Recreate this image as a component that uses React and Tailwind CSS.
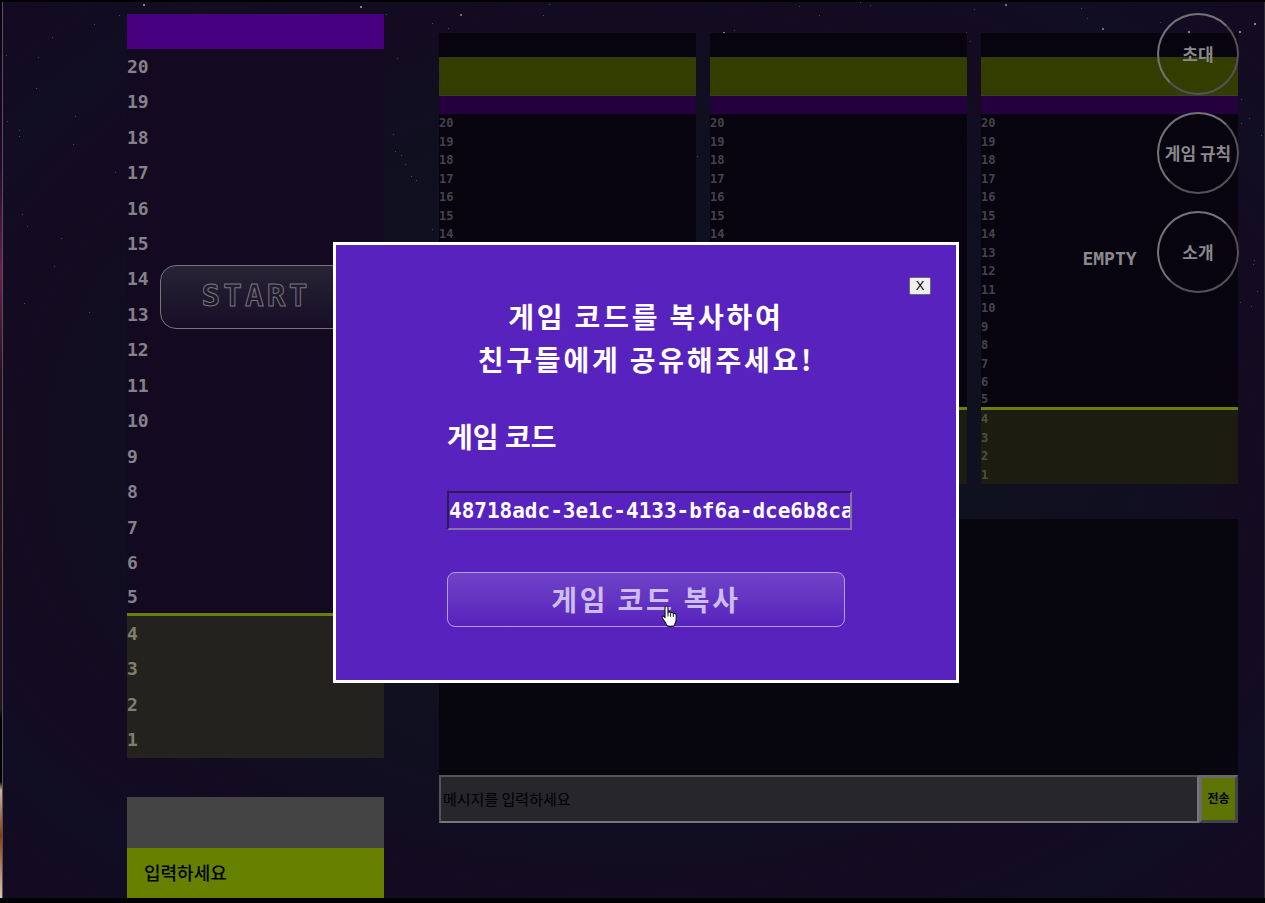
const MONO = "font-['DejaVu_Sans_Mono','Noto_Sans_CJK_KR',monospace]";
const HANGUL = "font-['Noto_Sans_CJK_KR',sans-serif]";
const LEVELS = Array.from({ length: 20 }, (_, i) => 20 - i);

const STARS = [
  [144, 5, 3], [361, 7, 3], [119, 15, 1], [94, 24, 1], [52, 37, 1], [6, 55, 1], [38, 57, 1], [36, 88, 1],
  [75, 116, 1], [7, 121, 1], [19, 130, 1], [19, 136, 1], [73, 144, 1], [115, 172, 1], [22, 214, 1], [27, 226, 1],
  [61, 238, 1], [54, 266, 1], [24, 303, 1], [89, 312, 1], [386, 14, 1], [397, 58, 1], [393, 134, 1], [395, 151, 1],
  [401, 155, 1], [405, 164, 1], [411, 176, 1], [416, 180, 1], [549, 4, 1], [461, 15, 2], [543, 15, 1], [432, 23, 1],
  [448, 28, 1], [724, 33, 3], [734, 30, 1], [799, 6, 1], [819, 15, 1], [697, 156, 1], [432, 229, 1], [860, 2, 1],
  [870, 5, 1], [974, 9, 1], [1006, 5, 2], [1081, 8, 1], [1087, 18, 1], [1103, 29, 2], [1160, 22, 1], [1189, 32, 3],
  [1240, 32, 3], [1255, 24, 3], [966, 32, 1], [970, 41, 1], [1241, 99, 1], [1249, 118, 1], [1241, 123, 1],
  [1261, 135, 1], [1254, 260, 1], [1253, 264, 1], [1257, 291, 1], [1240, 302, 1], [1251, 306, 1],
];

function Stars() {
  return (
    <svg className="pointer-events-none absolute -top-0.5 -left-[3px]" width="1265" height="400" aria-hidden="true">
      {STARS.map(([x, y, s]) => (
        <rect
          key={`${x}-${y}`}
          x={x - (s > 1 ? 1 : 0)}
          y={y - (s > 1 ? 1 : 0)}
          width={s > 1 ? 2 : 1}
          height={s > 1 ? 2 : 1}
          fill={s === 3 ? "#85828c" : s === 2 ? "#6d6a78" : "#4a4759"}
        />
      ))}
    </svg>
  );
}

function Levels({ small }) {
  return (
    <ol className={`grid min-h-0 flex-1 grid-rows-20 font-bold ${small ? "bg-[#070410] text-[12px] leading-[12px]" : "bg-[#130a22] text-[18px] leading-[18px]"}`}>
      {LEVELS.map((n) => {
        const low = n < 5;
        const tone = small
          ? low ? "bg-[#1c1d10] text-[#4e503c]" : "text-[#454348]"
          : low ? "bg-[#24221e] text-[#7f806b]" : "text-[#858188]";
        return (
          <li key={n} className={`flex min-h-0 items-center ${tone} ${n === 5 ? "border-b-[3px] border-[#6a7e0a]" : ""}`}>
            {n}
          </li>
        );
      })}
    </ol>
  );
}

function OpponentBoard() {
  return (
    <article className="relative flex min-w-0 flex-1 flex-col">
      <div className="h-6 bg-[#070410]" />
      <div className="h-[39px] border-b border-[#3d3d28] bg-[#333d00]" />
      <div className="h-[18px] bg-[#25003f]" />
      <Levels small />
      <p className="absolute inset-0 flex items-center justify-center text-[18px] font-bold text-[#8b898d]">EMPTY</p>
    </article>
  );
}

function RoundButton({ children }) {
  return (
    <button
      type="button"
      className={`flex size-[82px] items-center justify-center rounded-full border-2 border-t-[#757377] border-r-[#545257] border-b-[#545257] border-l-[#757377] text-[17px] leading-5 font-bold whitespace-nowrap text-[#8b898d] ${HANGUL}`}
    >
      {children}
    </button>
  );
}

function HandCursor() {
  return (
    <svg className="pointer-events-none absolute top-[33px] left-[214px]" width="17" height="23" viewBox="0 0 17 23" aria-hidden="true">
      <path
        d="M5.500 1C6.400 1 7 1.600 7 2.500V7.500C7.500 6.600 9.300 6.700 9.600 8C10.200 7.100 12 7.400 12.300 8.700C13 8 15.200 8.200 15.200 10.200V14.500C15.200 17 13.700 18.200 13.700 20.200C13 21.700 6.200 21.700 5.600 20.200C5.400 18.200 2.800 15.700 1.200 12.700C.7 11.100 2.200 10.300 3.500 12L4 12.600V2.500C4 1.600 4.600 1 5.500 1Z"
        fill="#fff"
        stroke="#1b1726"
        strokeWidth="1.2"
        strokeLinejoin="round"
      />
      <path d="M7 7.500V11.500M9.600 8.200V11.700M12.300 9V12" stroke="#1b1726" strokeWidth="1" fill="none" />
    </svg>
  );
}

function InviteDialog() {
  return (
    <section
      role="dialog"
      aria-labelledby="invite-title"
      className={`relative flex w-[626px] max-w-full flex-col items-center border-3 border-white bg-[#5822be] pt-[50px] pb-[53px] text-[28px] font-bold text-white ${HANGUL}`}
    >
      <button
        type="button"
        className="absolute top-8 right-[25px] h-[18px] w-[22px] rounded-[2px] border border-[#6b6b6b] bg-[#efefef] font-['Liberation_Sans',sans-serif] text-[13px] leading-4 font-normal text-black"
      >
        X
      </button>
      <h2 id="invite-title" className="text-center leading-[43px] tracking-widest">
        게임 코드를 복사하여
        <br />
        친구들에게 공유해주세요!
      </h2>
      <div className="mt-[34px] w-[398px]">
        <label htmlFor="game-code" className="block leading-[42px]">
          게임 코드
        </label>
        <input
          id="game-code"
          readOnly
          defaultValue="48718adc-3e1c-4133-bf6a-dce6b8ca1f52"
          className={`mt-[34px] block h-[39px] w-[405px] border-2 border-t-[#2b1c54] border-r-[#8672a6] border-b-[#8672a6] border-l-[#2b1c54] bg-transparent text-[21px] outline-none ${MONO}`}
        />
        <div className="relative mt-[42px]">
          <button
            type="button"
            className="block h-[55px] w-full rounded-lg border border-[#b49ee2] bg-linear-to-b from-[#7042c6] to-[#5822be] leading-[43px] tracking-widest text-[#cdbdec]"
          >
            게임 코드 복사
          </button>
          <HandCursor />
        </div>
      </div>
    </section>
  );
}

export default function App() {
  return (
    <div className={`flex h-screen min-h-[800px] bg-black pt-0.5 pb-[5px] ${MONO}`}>
      <div className="w-0.5 bg-[linear-gradient(to_bottom,#080210_0%,#23062e_18%,#6b1f4c_30%,#2a0c20_42%,#241414_79%,#000_80%,#000_87%,#c9b4a0_88%,#8a3a10_93%,#d8c8b0_100%)]" />
      <main className="relative flex flex-1 border-r border-l border-r-[#2c2c2c] border-l-[#55525c] bg-[#120e20] bg-[radial-gradient(ellipse_at_center,#0d1218_0%,#10111f_35%,#100f20_55%,#140b21_72%,#110d22_85%,#140a22_100%)] pt-3 pr-[26px] pl-[124px]">
        <Stars />

        <section className="relative mr-[55px] flex w-[257px] shrink-0 flex-col">
          <div className="h-[35px] shrink-0 bg-[#480080]" />
          <Levels />
          <button
            type="button"
            className="absolute top-[251px] left-[33px] h-[64px] w-48 rounded-2xl border border-[#77747c] bg-linear-to-b from-[#272334] to-[#160e26] pb-1 text-[31px] font-bold tracking-widest text-transparent [-webkit-text-stroke:1px_#77757e]"
          >
            START
          </button>
          <div className="mt-[39px] h-[51px] shrink-0 bg-[#444444]" />
          <input
            aria-label="입력하세요"
            placeholder="입력하세요"
            className="h-[50px] w-full shrink-0 bg-[#668000] px-[17px] text-[18px] font-medium outline-none placeholder:text-black"
          />
        </section>

        <div className="relative flex min-w-0 flex-1 flex-col gap-[35px] pt-[19px] pb-[75px]">
          <section className="flex min-h-0 flex-1 gap-3.5">
            <OpponentBoard />
            <OpponentBoard />
            <OpponentBoard />
          </section>
          <section className="flex h-[304px] shrink-0 flex-col">
            <div className="flex-1 bg-[#07060e]" />
            <form className="flex h-12">
              <input
                aria-label="메시지를 입력하세요"
                placeholder="메시지를 입력하세요"
                className={`min-w-0 flex-1 border-2 border-t-[#545357] border-r-[#77757a] border-b-[#77757a] border-l-[#545357] bg-[#26262b] px-0.5 text-[15px] outline-none placeholder:text-black ${HANGUL}`}
              />
              <button
                type="button"
                className="w-[39px] border-3 border-t-[#6b696e] border-r-[#444347] border-b-[#444347] border-l-[#6b696e] bg-[#5d7405] text-[12px] font-bold text-black"
              >
                전송
              </button>
            </form>
          </section>
        </div>

        <nav className="absolute top-[11px] right-[25px] flex flex-col gap-[17px]">
          <RoundButton>초대</RoundButton>
          <RoundButton>게임 규칙</RoundButton>
          <RoundButton>소개</RoundButton>
        </nav>

        <div className="pointer-events-none absolute inset-0 flex items-center justify-center pt-[25px] pl-[25px]">
          <div className="pointer-events-auto max-w-full">
            <InviteDialog />
          </div>
        </div>
      </main>
    </div>
  );
}
